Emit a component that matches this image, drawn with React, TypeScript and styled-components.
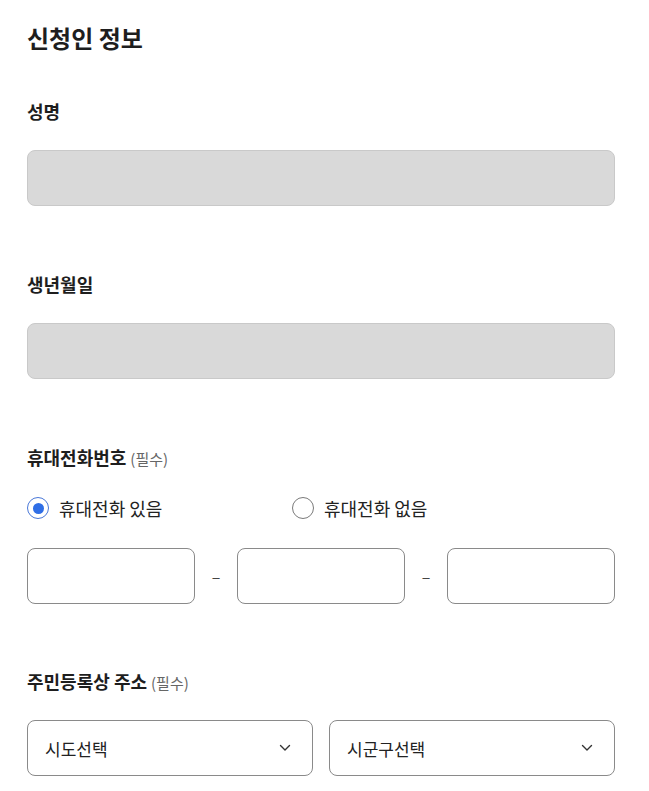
import styled, { createGlobalStyle } from 'styled-components';

const GlobalStyle = createGlobalStyle`
  body {
    margin: 0;
    background: #ffffff;
    font-family: "Noto Sans CJK KR", "Noto Sans", sans-serif;
    color: #222222;
  }
`;

const Page = styled.div`
  width: 588px;
  padding: 21px 0 40px 27px;
`;

const Title = styled.h2`
  margin: 0 0 44px;
  font-size: 24px;
  line-height: 34px;
  font-weight: 700;
  color: #1e1e1e;
`;

const Field = styled.div<{ $top?: number }>`
  margin-top: ${(p) => p.$top ?? 66}px;
`;

const Label = styled.div`
  display: flex;
  align-items: baseline;
  gap: 4px;
  height: 24px;
  margin-bottom: 27px;
  font-size: 18px;
  line-height: 24px;
  font-weight: 700;
  color: #1e1e1e;
`;

const Required = styled.span`
  font-size: 15px;
  line-height: 24px;
  font-weight: 400;
  color: #666666;
`;

const Input = styled.input<{ $disabled?: boolean }>`
  display: block;
  box-sizing: border-box;
  width: 100%;
  height: 56px;
  margin: 0;
  padding: 0 17px;
  border: 1px solid ${(p) => (p.$disabled ? '#c9c9c9' : '#8a8a8a')};
  border-radius: 8px;
  background: ${(p) => (p.$disabled ? '#d9d9d9' : '#ffffff')};
  font-family: inherit;
  font-size: 17px;
  outline: none;
`;

const RadioRow = styled.div`
  display: flex;
  align-items: center;
  height: 24px;
  margin-bottom: 28px;
`;

const RadioOption = styled.label`
  display: flex;
  align-items: center;
  gap: 10px;
  width: 265px;
  font-size: 18px;
  line-height: 24px;
  color: #222222;
  cursor: pointer;
`;

const RadioCircle = styled.span<{ $checked?: boolean }>`
  box-sizing: border-box;
  display: flex;
  align-items: center;
  justify-content: center;
  width: 22px;
  height: 22px;
  border-radius: 50%;
  border: 1.5px solid ${(p) => (p.$checked ? '#4a78d8' : '#7a7a7a')};
  background: #ffffff;

  &::after {
    content: '';
    display: ${(p) => (p.$checked ? 'block' : 'none')};
    width: 11px;
    height: 11px;
    border-radius: 50%;
    background: #2f6ee6;
  }
`;

const PhoneRow = styled.div`
  display: grid;
  grid-template-columns: 1fr 42px 1fr 42px 1fr;
  align-items: center;
`;

const Dash = styled.span`
  text-align: center;
  font-size: 16px;
  color: #444444;
`;

const SelectRow = styled.div`
  display: grid;
  grid-template-columns: 1fr 1fr;
  gap: 16px;
`;

const Select = styled.div`
  box-sizing: border-box;
  display: flex;
  align-items: center;
  justify-content: space-between;
  height: 56px;
  padding: 0 20px 0 17px;
  border: 1px solid #8a8a8a;
  border-radius: 8px;
  font-size: 17px;
  color: #222222;
`;

const Chevron = () => (
  <svg width="14" height="14" viewBox="0 0 14 14" fill="none">
    <path d="M2.5 4.5 L7 9 L11.5 4.5" stroke="#333333" strokeWidth="1.4" strokeLinecap="round" strokeLinejoin="round" />
  </svg>
);

export default function App() {
  return (
    <>
      <GlobalStyle />
      <Page>
        <Title>신청인 정보</Title>

        <Field $top={0}>
          <Label>성명</Label>
          <Input $disabled disabled />
        </Field>

        <Field>
          <Label>생년월일</Label>
          <Input $disabled disabled />
        </Field>

        <Field>
          <Label>
            휴대전화번호
            <Required>(필수)</Required>
          </Label>
          <RadioRow>
            <RadioOption>
              <RadioCircle $checked />
              휴대전화 있음
            </RadioOption>
            <RadioOption>
              <RadioCircle />
              휴대전화 없음
            </RadioOption>
          </RadioRow>
          <PhoneRow>
            <Input />
            <Dash>–</Dash>
            <Input />
            <Dash>–</Dash>
            <Input />
          </PhoneRow>
        </Field>

        <Field $top={65}>
          <Label>
            주민등록상 주소
            <Required>(필수)</Required>
          </Label>
          <SelectRow>
            <Select>
              시도선택
              <Chevron />
            </Select>
            <Select>
              시군구선택
              <Chevron />
            </Select>
          </SelectRow>
        </Field>
      </Page>
    </>
  );
}
